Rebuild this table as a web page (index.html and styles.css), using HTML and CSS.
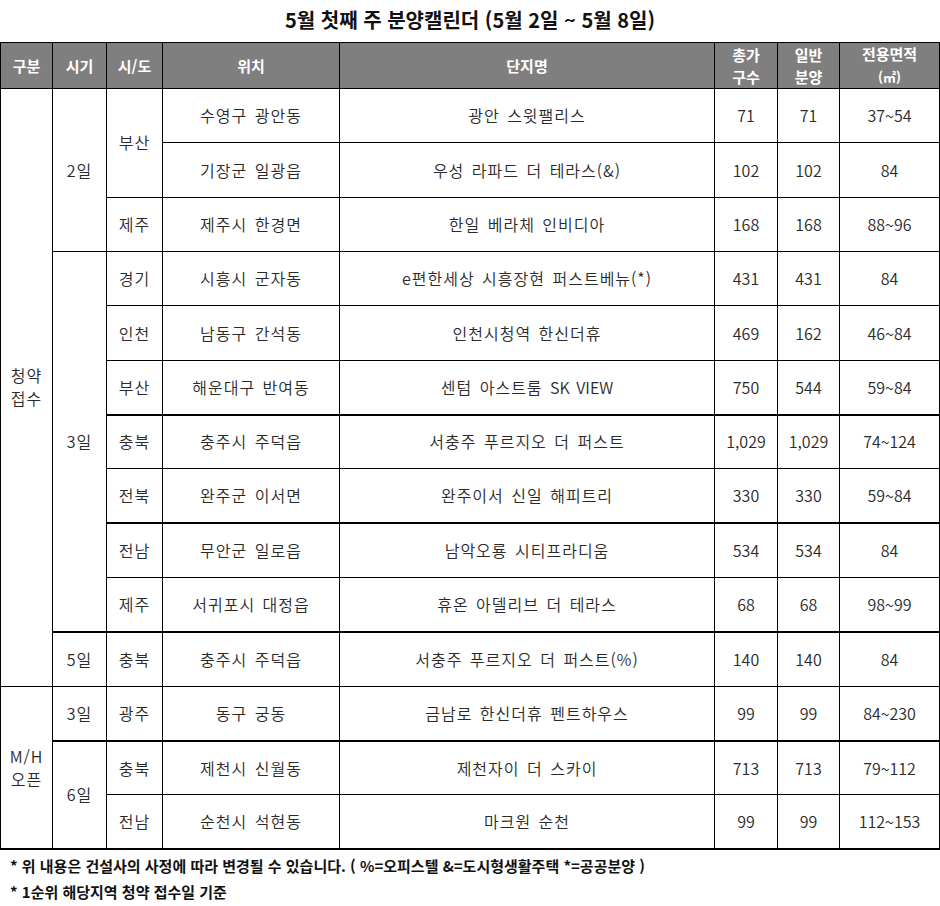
FILE: index.html
```html
<!DOCTYPE html>
<html lang="ko">
<head>
<meta charset="utf-8">
<title>5월 첫째 주 분양캘린더</title>
<link rel="stylesheet" href="styles.css">
</head>
<body>
<h1 class="title">5월 첫째 주 분양캘린더 (5월 2일 ~ 5월 8일)</h1>
<table class="cal">
  <colgroup>
    <col class="c1"><col class="c2"><col class="c3"><col class="c4"><col class="c5"><col class="c6"><col class="c7"><col class="c8">
  </colgroup>
  <thead>
    <tr>
      <th>구분</th><th>시기</th><th>시/도</th><th>위치</th><th>단지명</th><th>총가<br>구수</th><th>일반<br>분양</th><th>전용면적<br><span class="unit">(㎡)</span></th>
    </tr>
  </thead>
  <tbody>
    <tr>
      <td rowspan="11" class="t">청약<br>접수</td><td rowspan="3" class="t">2일</td><td rowspan="2" class="t">부산</td><td class="t">수영구 광안동</td><td class="t">광안 스윗팰리스</td><td>71</td><td>71</td><td>37~54</td>
    </tr>
    <tr>
      <td class="t">기장군 일광읍</td><td class="t">우성 라파드 더 테라스(&amp;)</td><td>102</td><td>102</td><td>84</td>
    </tr>
    <tr>
      <td class="t">제주</td><td class="t">제주시 한경면</td><td class="t">한일 베라체 인비디아</td><td>168</td><td>168</td><td>88~96</td>
    </tr>
    <tr>
      <td rowspan="7" class="t">3일</td><td class="t">경기</td><td class="t">시흥시 군자동</td><td class="t">e편한세상 시흥장현 퍼스트베뉴(*)</td><td>431</td><td>431</td><td>84</td>
    </tr>
    <tr>
      <td class="t">인천</td><td class="t">남동구 간석동</td><td class="t">인천시청역 한신더휴</td><td>469</td><td>162</td><td>46~84</td>
    </tr>
    <tr>
      <td class="t">부산</td><td class="t">해운대구 반여동</td><td class="t">센텀 아스트룸 <span class="latin">SK VIEW</span></td><td>750</td><td>544</td><td>59~84</td>
    </tr>
    <tr class="thick">
      <td class="t">충북</td><td class="t">충주시 주덕읍</td><td class="t">서충주 푸르지오 더 퍼스트</td><td>1,029</td><td>1,029</td><td>74~124</td>
    </tr>
    <tr>
      <td class="t">전북</td><td class="t">완주군 이서면</td><td class="t">완주이서 신일 해피트리</td><td>330</td><td>330</td><td>59~84</td>
    </tr>
    <tr class="thick">
      <td class="t">전남</td><td class="t">무안군 일로읍</td><td class="t">남악오룡 시티프라디움</td><td>534</td><td>534</td><td>84</td>
    </tr>
    <tr>
      <td class="t">제주</td><td class="t">서귀포시 대정읍</td><td class="t">휴온 아델리브 더 테라스</td><td>68</td><td>68</td><td>98~99</td>
    </tr>
    <tr class="thick">
      <td class="t">5일</td><td class="t">충북</td><td class="t">충주시 주덕읍</td><td class="t">서충주 푸르지오 더 퍼스트(%)</td><td>140</td><td>140</td><td>84</td>
    </tr>
    <tr>
      <td rowspan="3" class="t">M/H<br>오픈</td><td class="t">3일</td><td class="t">광주</td><td class="t">동구 궁동</td><td class="t">금남로 한신더휴 펜트하우스</td><td>99</td><td>99</td><td>84~230</td>
    </tr>
    <tr class="thick">
      <td rowspan="2" class="t">6일</td><td class="t">충북</td><td class="t">제천시 신월동</td><td class="t">제천자이 더 스카이</td><td>713</td><td>713</td><td>79~112</td>
    </tr>
    <tr class="last">
      <td class="t">전남</td><td class="t">순천시 석현동</td><td class="t">마크원 순천</td><td>99</td><td>99</td><td>112~153</td>
    </tr>
  </tbody>
</table>
<div class="notes">
  <p>* 위 내용은 건설사의 사정에 따라 변경될 수 있습니다. ( %=오피스텔 &amp;=도시형생활주택 *=공공분양 )</p>
  <p>* 1순위 해당지역 청약 접수일 기준</p>
</div>
</body>
</html>
```
FILE: styles.css
```css
html, body {
  margin: 0;
  padding: 0;
  background: #fff;
}
body {
  width: 940px;
  font-family: "Noto Sans CJK KR", "Noto Sans", sans-serif;
  color: #2a2a2a;
}
.title {
  margin: 0;
  height: 42px;
  line-height: 40px;
  font-size: 20px;
  font-weight: 700;
  text-align: center;
  color: #111;
}
.cal {
  width: 939px;
  border-collapse: collapse;
  table-layout: fixed;
  font-size: 16px;
  font-weight: 350;
}
.c1 { width: 52px; }
.c2 { width: 54px; }
.c3 { width: 56px; }
.c4 { width: 177px; }
.c5 { width: 375px; }
.c6 { width: 63px; }
.c7 { width: 62px; }
.c8 { width: 100px; }
.cal th, .cal td {
  border: 1px solid #000;
  padding: 0;
  text-align: center;
  vertical-align: middle;
}
.cal th {
  background: #7f7f7f;
  color: #fff;
  font-size: 15px;
  font-weight: 700;
  line-height: 22px;
}
.cal thead tr {
  height: 45px;
}
.cal tbody tr {
  height: 54.35px;
}
.cal td {
  line-height: 23px;
}
.cal td.t {
  letter-spacing: 1px;
  word-spacing: 2px;
}
.cal td.t .latin {
  letter-spacing: 0;
}
.cal tr.thick > td {
  border-top: 2px solid #000;
}
.cal tr.last > td,
.cal td[rowspan="3"]:first-child,
.cal tr.thick > td[rowspan="2"] {
  border-bottom: 2px solid #000;
}
.unit {
  font-size: 13px;
}
.notes {
  padding-left: 10px;
  margin-top: 3px;
}
.notes p {
  margin: 0;
  line-height: 26px;
  font-size: 15px;
  font-weight: 700;
  color: #111;
}
```
